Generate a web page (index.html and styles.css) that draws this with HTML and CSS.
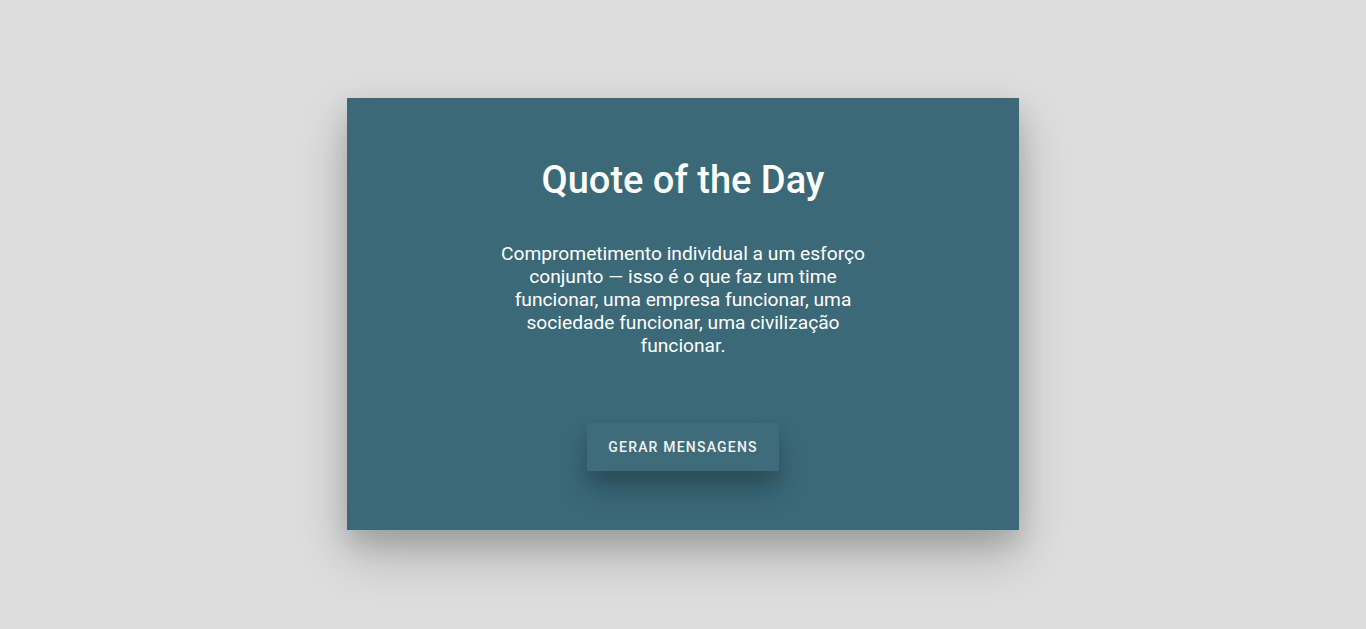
FILE: index.html
```html
<!DOCTYPE html>
<html lang="pt">
<head>
<meta charset="utf-8">
<title>Quote of the Day</title>
<link rel="stylesheet" href="styles.css">
</head>
<body>
<main class="page">
  <section class="card">
    <h1 class="title">Quote of the Day</h1>
    <p class="quote">Comprometimento individual a um esforço conjunto — isso é o que faz um time funcionar, uma empresa funcionar, uma sociedade funcionar, uma civilização funcionar.</p>
    <button class="btn" type="button">Gerar mensagens</button>
  </section>
</main>
</body>
</html>
```
FILE: styles.css
```css
html, body {
  margin: 0;
  padding: 0;
  height: 100%;
}
body {
  background: #dddddd;
  font-family: Roboto, "Liberation Sans", sans-serif;
}
.page {
  height: 100%;
  box-sizing: border-box;
  padding-bottom: 1px;
  display: flex;
  align-items: center;
  justify-content: center;
}
.card {
  width: 672px;
  height: 432px;
  box-sizing: border-box;
  background: #3b6978;
  box-shadow: 0 24px 48px rgba(0,0,0,0.22), 0 12px 24px rgba(0,0,0,0.12);
  display: flex;
  flex-direction: column;
  align-items: center;
  padding-top: 57px;
  color: #ffffff;
}
.title {
  margin: 0;
  font-size: 38px;
  font-weight: 500;
  line-height: 50px;
}
.quote {
  margin: 37px 0 0;
  width: 380px;
  text-align: center;
  font-size: 19.2px;
  line-height: 23px;
}
.btn {
  margin-top: 66px;
  width: 192px;
  height: 48px;
  border: none;
  border-radius: 2px;
  background: #3e6c7b;
  color: #f2f2f2;
  font-family: Roboto, "Liberation Sans", sans-serif;
  font-size: 14px;
  font-weight: 500;
  letter-spacing: 1.2px;
  text-transform: uppercase;
  box-shadow: 0 20px 30px rgba(0,0,0,0.2), 0 10px 15px rgba(0,0,0,0.1);
  cursor: pointer;
}
```
